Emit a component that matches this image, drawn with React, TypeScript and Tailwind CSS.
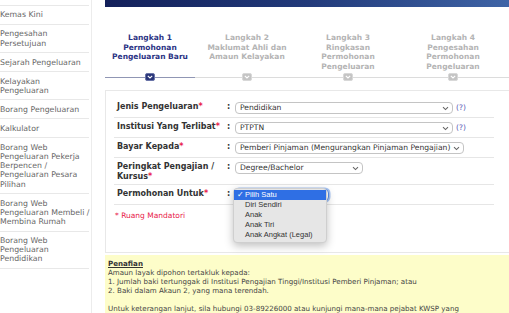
import React from "react";

const menu: string[][] = [
  ["Kemas Kini"],
  ["Pengesahan", "Persetujuan"],
  ["Sejarah Pengeluaran"],
  ["Kelayakan", "Pengeluaran"],
  ["Borang Pengeluaran"],
  ["Kalkulator"],
  ["Borang Web", "Pengeluaran Pekerja", "Berpencen /", "Pengeluaran Pesara", "Pilihan"],
  ["Borang Web", "Pengeluaran Membeli /", "Membina Rumah"],
  ["Borang Web", "Pengeluaran", "Pendidikan"],
];

const steps = [
  { w: "w-[90px]", lines: ["Langkah 1", "Permohonan", "Pengeluaran Baru"], on: true },
  { w: "w-[104px]", lines: ["Langkah 2", "Maklumat Ahli dan", "Amaun Kelayakan"], on: false },
  { w: "w-[98px]", lines: ["Langkah 3", "Ringkasan", "Permohonan", "Pengeluaran"], on: false },
  { w: "w-[112px]", lines: ["Langkah 4", "Pengesahan", "Permohonan", "Pengeluaran"], on: false },
];

function Chevron() {
  return (
    <svg width="7" height="5" viewBox="0 0 7 5" className="shrink-0">
      <path d="M1 1.2 L3.5 3.6 L6 1.2" fill="none" stroke="#666" strokeWidth="1.1" />
    </svg>
  );
}

function Select({ text, w, help }: { text: string; w: string; help?: boolean }) {
  return (
    <div className="flex items-center">
      <div className={`${w} h-[12px] border border-[#c4c4c4] rounded-[4px] bg-white flex items-center justify-between pl-[4px] pr-[3px] text-[7.6px] text-[#333] leading-none`}>
        <span className="whitespace-nowrap">{text}</span>
        <Chevron />
      </div>
      {help && <span className="ml-[3px] text-[7.5px] text-[#5656b4]">(?)</span>}
    </div>
  );
}

function Row({ label, children, last }: { label: React.ReactNode; children: React.ReactNode; last?: boolean }) {
  return (
    <div className={`flex items-start pl-[3px] pt-[4px] pb-[3px] border-b border-[#e6e6e6] ${last ? "relative" : ""}`}>
      <div className="w-[110px] font-bold text-[8px] leading-[9.5px] text-[#333]">{label}</div>
      <div className="w-[8px] font-bold text-[8px] leading-[9.5px] text-[#333]">:</div>
      <div>{children}</div>
    </div>
  );
}

const Star = () => <span className="text-[#e8204a]">*</span>;

export default function App() {
  return (
    <div className="w-[509px] h-[313px] overflow-hidden flex bg-white font-['DejaVu_Sans',Verdana,sans-serif]">
      <div className="w-[92px] shrink-0 border-r border-[#ececec]">
        <div className="h-[6px] w-[89px] border-b border-[#e8e8e8]"></div>
        {menu.map((m, i) => (
          <div key={i} className="w-[89px] py-[4.4px] border-b border-[#e8e8e8] text-[7.8px] leading-[9.2px] text-[#666] whitespace-nowrap">
            {m.map((l, j) => (
              <div key={j}>{l}</div>
            ))}
          </div>
        ))}
      </div>

      <div className="flex-1 pl-[13px] overflow-hidden">
        <div className="h-[7px] bg-gradient-to-r from-[#13205a] via-[#223a7a] to-[#3f64a6]"></div>

        <div className="flex mt-[26px]">
          {steps.map((s, i) => (
            <div key={i} className={`${s.w} shrink-0`}>
              <div className={`h-[40px] text-center font-bold text-[7.5px] leading-[9.6px] ${s.on ? "text-[#2b3384]" : "text-[#b4b4b4]"}`}>
                {s.lines.map((l, j) => (
                  <div key={j}>{l}</div>
                ))}
              </div>
              <div className="relative h-[8px] flex items-center justify-center">
                <div className={`absolute left-0 right-0 top-[4px] h-px ${s.on ? "bg-[#9096b4]" : "bg-[#dcdcdc]"}`}></div>
                <div className={`relative w-[10px] h-[8px] rounded-[2px] flex items-center justify-center ${s.on ? "bg-[#283478] border border-[#6a74a8]" : "bg-[#c4c4c4] border border-[#d8d8d8]"}`}>
                  <svg width="6" height="4" viewBox="0 0 6 4">
                    <path d="M0.8 0.8 L3 3 L5.2 0.8" fill="none" stroke="#fff" strokeWidth="1.1" />
                  </svg>
                </div>
              </div>
            </div>
          ))}
        </div>

        <div className="mt-[9px] w-[430px] border border-[#e8e8e8] pt-[7px] pl-[8px] pb-[31px]">
          <div className="w-[380px]">
            <Row label={<>Jenis Pengeluaran<Star /></>}>
              <Select text="Pendidikan" w="w-[218px]" help />
            </Row>
            <Row label={<>Institusi Yang Terlibat<Star /></>}>
              <Select text="PTPTN" w="w-[218px]" help />
            </Row>
            <Row label={<>Bayar Kepada<Star /></>}>
              <Select text="Pemberi Pinjaman (Mengurangkan Pinjaman Pengajian)" w="w-[229px]" />
            </Row>
            <Row label={<>Peringkat Pengajian /<br />Kursus<Star /></>}>
              <Select text="Degree/Bachelor" w="w-[128px]" />
            </Row>
            <Row last label={<>Permohonan Untuk<Star /></>}>
              <div className="w-[94px] h-[12px] rounded-[4px] border border-[#5b8fe6] shadow-[0_0_0_1.5px_#a9c6f4] bg-white flex items-center justify-end pr-[3px]">
                <Chevron />
              </div>
              <div className="absolute left-[119px] top-[3px] w-[94px] h-[55px] rounded-[4px] bg-[#e6e6e6] border border-[#cfcfcf] shadow-[0_3px_8px_rgba(0,0,0,0.25)] pt-[1px] font-['Liberation_Sans',Arial,sans-serif] text-[7.5px] leading-[10px] text-[#333]">
                <div className="bg-[#2f6fe4] text-white flex items-center">
                  <span className="w-[11px] pl-[3px]">✓</span>
                  <span>Pilih Satu</span>
                </div>
                <div className="pl-[11px]">Diri Sendiri</div>
                <div className="pl-[11px]">Anak</div>
                <div className="pl-[11px]">Anak Tiri</div>
                <div className="pl-[11px]">Anak Angkat (Legal)</div>
              </div>
            </Row>
          </div>
          <div className="mt-[6px] pl-[1px] text-[7.5px] leading-[9.5px] text-[#e8204a]">* Ruang Mandatori</div>
        </div>

        <div className="mt-[2px] bg-[#fdfdc9] pl-[3px] pt-[4px] h-[70px] text-[7.1px] leading-[9px] text-[#444] whitespace-nowrap">
          <div className="font-bold underline text-[#333]">Penafian</div>
          <div>Amaun layak dipohon tertakluk kepada:</div>
          <div>1. Jumlah baki tertunggak di Institusi Pengajian Tinggi/Institusi Pemberi Pinjaman; atau</div>
          <div>2. Baki dalam Akaun 2, yang mana terendah.</div>
          <div className="h-[9px]"></div>
          <div>Untuk keterangan lanjut, sila hubungi 03-89226000 atau kunjungi mana-mana pejabat KWSP yang</div>
        </div>
      </div>
    </div>
  );
}
